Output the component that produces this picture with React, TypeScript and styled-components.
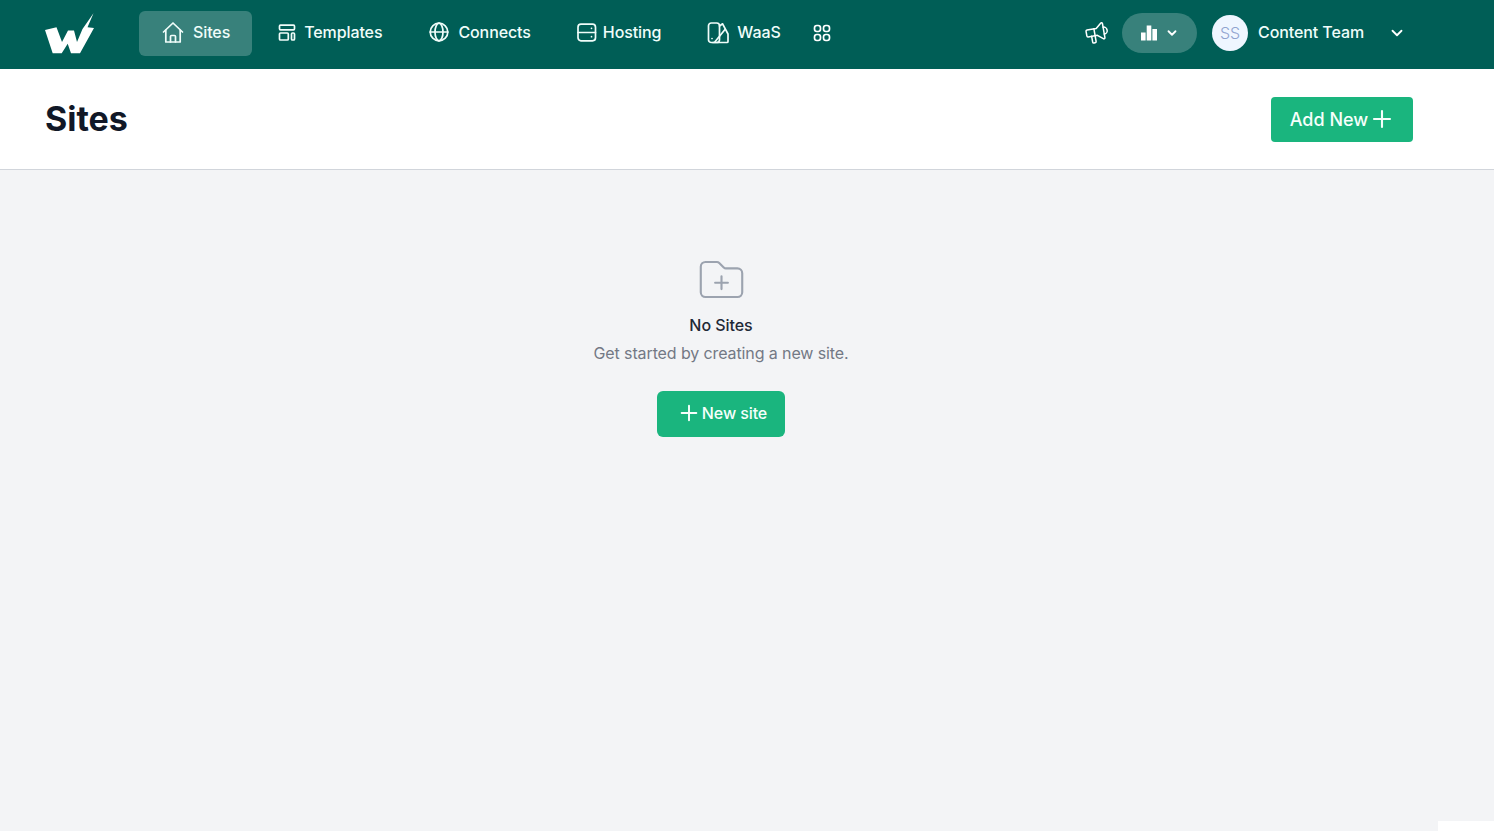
import React from "react";
import styled, { createGlobalStyle } from "styled-components";

const Global = createGlobalStyle`
  html, body { margin: 0; padding: 0; height: 100%; background: #f3f4f6; }
  body { font-family: Inter, "Noto Sans", sans-serif; }
  #root { min-height: 100%; }
`;

const Page = styled.div`
  position: relative;
  width: 100%;
  height: 831px;
  overflow: hidden;
  display: flex;
  flex-direction: column;
  background: #f3f4f6;
`;

const Header = styled.header`
  height: 69px;
  flex: none;
  box-sizing: border-box;
  background: #005e56;
  display: flex;
  align-items: center;
  padding: 0 88px 3px 45px;
  color: #fff;
`;

const LogoMark = styled.svg`
  width: 50px;
  height: 41px;
  flex: none;
  margin-right: 44px;
`;

const Nav = styled.nav`
  display: flex;
  align-items: center;
  flex: 1;
`;

const NavItem = styled.a<{ $active?: boolean; $gap: number }>`
  height: 45px;
  margin-top: 1px;
  padding: 0 22px 3px;
  box-sizing: border-box;
  display: flex;
  align-items: center;
  gap: ${(p) => p.$gap}px;
  border-radius: 6px;
  font-size: 16px;
  font-weight: 500;
  line-height: 24px;
  letter-spacing: -0.1px;
  color: #f0fdfa;
  background: ${(p) => (p.$active ? "rgba(255,255,255,0.22)" : "transparent")};
`;

const Icon = styled.svg`
  width: 24px;
  height: 24px;
  flex: none;
  fill: none;
  stroke: currentColor;
  stroke-width: 1.7;
  stroke-linecap: round;
  stroke-linejoin: round;
  overflow: visible;
`;

const MoreIcon = styled(Icon)`
  margin-left: 9px;
  width: 20px;
  height: 20px;
`;

const Right = styled.div`
  display: flex;
  align-items: center;
`;

const Speaker = styled(Icon)`
  width: 28px;
  height: 28px;
  stroke-width: 1.3;
  transform: rotate(-10deg);
  margin-right: 11px;
`;

const StatsPill = styled.button`
  width: 75px;
  height: 40px;
  border: 0;
  border-radius: 20px;
  background: rgba(255, 255, 255, 0.22);
  color: #fff;
  display: flex;
  align-items: center;
  justify-content: center;
  gap: 7px;
  padding: 0;
  margin-right: 15px;
`;

const BarsIcon = styled.svg`
  width: 18px;
  height: 18px;
  flex: none;
  fill: #fff;
`;

const Avatar = styled.div`
  width: 36px;
  height: 36px;
  border-radius: 50%;
  background: #eff6ff;
  color: #8fa3cf;
  font-size: 16px;
  font-weight: 300;
  display: flex;
  align-items: center;
  justify-content: center;
  margin-right: 10px;
`;

const UserName = styled.span`
  font-size: 16px;
  font-weight: 500;
  line-height: 24px;
  letter-spacing: -0.1px;
  color: #f0fdfa;
  margin-right: 24px;
  padding-bottom: 2px;
`;

const Chevron = styled(Icon)<{ $size: number }>`
  width: ${(p) => p.$size}px;
  height: ${(p) => p.$size}px;
  stroke-width: ${(p) => 44 / p.$size};
`;

const TitleBar = styled.div`
  height: 101px;
  flex: none;
  box-sizing: border-box;
  background: #fff;
  border-bottom: 1px solid #d1d5db;
  display: flex;
  align-items: center;
  justify-content: space-between;
  padding: 0 81px 0 45px;
`;

const Title = styled.h1`
  margin: 0;
  font-size: 34px;
  line-height: 40px;
  font-weight: 700;
  color: #111827;
`;

const AddButton = styled.button`
  height: 45px;
  width: 142px;
  border: 0;
  border-radius: 4px;
  background: #1ab57e;
  color: #f6fffb;
  font-family: inherit;
  font-size: 18px;
  font-weight: 500;
  display: flex;
  align-items: center;
  justify-content: center;
  gap: 2px;
  padding: 0;
`;

const Plus = styled(Icon)<{ $size: number }>`
  width: ${(p) => p.$size}px;
  height: ${(p) => p.$size}px;
  stroke-width: 2.1;
`;

const Empty = styled.main`
  flex: 1;
  display: flex;
  flex-direction: column;
  align-items: center;
  padding: 84px 52px 0 0;
`;

const FolderIcon = styled(Icon)`
  width: 51px;
  height: 51px;
  color: #9ca3af;
  stroke-width: 1;
  margin-bottom: 8px;
`;

const EmptyTitle = styled.h3`
  margin: 0 0 4px;
  font-size: 16px;
  line-height: 24px;
  font-weight: 500;
  letter-spacing: -0.05px;
  color: #1f2937;
`;

const EmptyText = styled.p`
  margin: 0 0 26px;
  font-size: 16px;
  line-height: 24px;
  letter-spacing: -0.11px;
  color: #737985;
`;

const NewButton = styled.button`
  width: 128px;
  height: 46px;
  border: 0;
  border-radius: 6px;
  background: #1ab57e;
  color: #f6fffb;
  font-family: inherit;
  font-size: 16px;
  font-weight: 500;
  letter-spacing: -0.1px;
  display: flex;
  align-items: center;
  justify-content: center;
  gap: 2px;
  padding: 0 0 2px 3px;
`;

const Corner = styled.div`
  position: absolute;
  right: 0;
  bottom: 0;
  width: 56px;
  height: 10px;
  background: #fff;
`;

const PlusPath = () => <path d="M12 4v16M4 12h16" />;

export default function App() {
  return (
    <Page>
      <Global />
      <Header>
        <LogoMark viewBox="45 12.5 50 41" aria-label="logo">
          <path
            fill="#fff"
            d="M45 29.5 L56.5 26.8 L62 41.5 L68 30 L74 30 L77 41.5 L82.5 28.5 L93.5 12.8 L87.5 26.8 L94 27.5 L80 52.8 L71 52.8 L67.7 43.3 L61.7 52.8 L52.7 52.8 Z"
          />
        </LogoMark>
        <Nav>
          <NavItem $active $gap={8}>
            <Icon viewBox="0 0 24 24">
              <path d="M2.5 12 12 3l9.5 9" />
              <path d="M4.8 10v12h14.4V10" />
              <path d="M9.5 22v-5.5a1 1 0 0 1 1-1h3a1 1 0 0 1 1 1V22" />
            </Icon>
            Sites
          </NavItem>
          <NavItem $gap={6}>
            <Icon viewBox="0 0 24 24">
              <rect x="5.5" y="5.2" width="15" height="4.6" rx="1" />
              <rect x="5.5" y="13" width="8.8" height="7" rx="1" />
              <rect x="17.5" y="13" width="3" height="7" rx="1" />
            </Icon>
            Templates
          </NavItem>
          <NavItem $gap={8}>
            <Icon viewBox="0 0 24 24">
              <circle cx="13" cy="12" r="8.8" />
              <path d="M4.2 12h17.6" />
              <ellipse cx="13" cy="12" rx="4" ry="8.8" />
            </Icon>
            Connects
          </NavItem>
          <NavItem $gap={4}>
            <Icon viewBox="0 0 24 24">
              <rect x="3" y="4.2" width="17.5" height="16.6" rx="3" />
              <path d="M3 12.5h17.5M16.5 8.3h.01M16.5 16.7h.01" />
            </Icon>
            Hosting
          </NavItem>
          <NavItem $gap={8}>
            <Icon viewBox="0 0 24 24">
              <rect x="3.5" y="3" width="11" height="19.5" rx="2.8" />
              <path d="M14.5 6 17.6 3.8 23 14v7.5a1 1 0 0 1-1 1H8" />
              <path d="M10 21.8 20 9.5" />
              <path d="M7 18.5h.01" />
            </Icon>
            WaaS
          </NavItem>
          <MoreIcon viewBox="0 0 20 20">
            <rect x="2.5" y="2.5" width="6" height="6" rx="2.4" />
            <rect x="11.5" y="2.5" width="6" height="6" rx="2.4" />
            <rect x="2.5" y="11.5" width="6" height="6" rx="2.4" />
            <rect x="11.5" y="11.5" width="6" height="6" rx="2.4" />
          </MoreIcon>
        </Nav>
        <Right>
          <Speaker viewBox="0 0 24 24">
            <path d="M18 8a3 3 0 0 1 0 6" />
            <path d="M10 8v11a1 1 0 0 1-1 1H8a1 1 0 0 1-1-1v-5" />
            <path d="M12 8l4.524-3.77A.9.9 0 0 1 18 4.922v12.156a.9.9 0 0 1-1.476.692L12 14H4a1 1 0 0 1-1-1V9a1 1 0 0 1 1-1h8" />
          </Speaker>
          <StatsPill aria-label="stats">
            <BarsIcon viewBox="0 0 18 18">
              <rect x="1" y="8.5" width="4.6" height="8" />
              <rect x="6.7" y="1.5" width="4.6" height="15" />
              <rect x="12.4" y="5" width="4.6" height="11.5" />
            </BarsIcon>
            <Chevron $size={14} viewBox="0 0 24 24">
              <path d="M6 9l6 6 6-6" />
            </Chevron>
          </StatsPill>
          <Avatar>SS</Avatar>
          <UserName>Content Team</UserName>
          <Chevron $size={18} viewBox="0 0 24 24">
            <path d="M6 9l6 6 6-6" />
          </Chevron>
        </Right>
      </Header>
      <TitleBar>
        <Title>Sites</Title>
        <AddButton>
          Add New
          <Plus $size={24} viewBox="0 0 24 24">
            <PlusPath />
          </Plus>
        </AddButton>
      </TitleBar>
      <Empty>
        <FolderIcon viewBox="0 0 24 24">
          <path d="M12 10.5v6m3-3H9m4.06-7.19-2.12-2.12a1.5 1.5 0 0 0-1.061-.44H4.5A2.25 2.25 0 0 0 2.25 6v12a2.25 2.25 0 0 0 2.25 2.25h15A2.25 2.25 0 0 0 21.75 18V9a2.25 2.25 0 0 0-2.25-2.25h-5.379a1.5 1.5 0 0 1-1.06-.44Z" />
        </FolderIcon>
        <EmptyTitle>No Sites</EmptyTitle>
        <EmptyText>Get started by creating a new site.</EmptyText>
        <NewButton>
          <Plus $size={22} viewBox="0 0 24 24">
            <PlusPath />
          </Plus>
          New site
        </NewButton>
      </Empty>
      <Corner />
    </Page>
  );
}
